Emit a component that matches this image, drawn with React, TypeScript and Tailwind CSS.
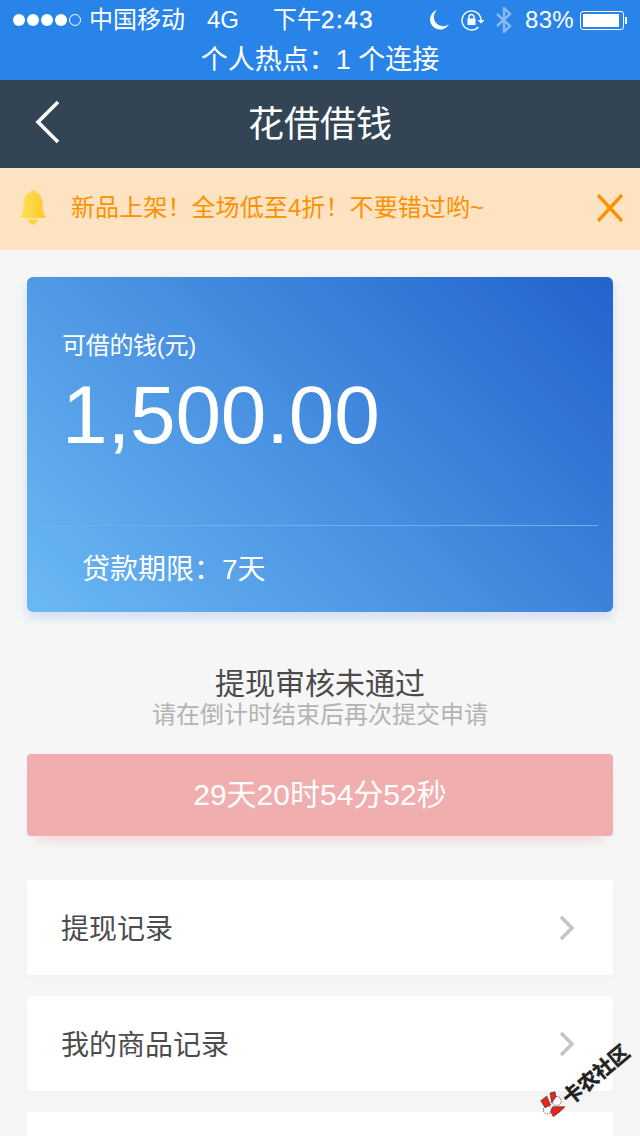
const cjk = "font-['Liberation_Sans','Noto_Sans_CJK_SC',sans-serif]";

function StatusBar() {
  return (
    <div className="flex h-10 items-center text-white pl-[13px] text-[24px] leading-none">
      <div className="flex items-center gap-[2px]">
        <span className="h-[12px] w-[12px] rounded-full bg-white" />
        <span className="h-[12px] w-[12px] rounded-full bg-white" />
        <span className="h-[12px] w-[12px] rounded-full bg-white" />
        <span className="h-[12px] w-[12px] rounded-full bg-white" />
        <span className="h-[12px] w-[12px] rounded-full border border-white" />
      </div>
      <span className="ml-[8px] w-[118px]">中国移动</span>
      <span className="w-[66px]">4G</span>
      <span className="w-[157px]">
        下午<span className="tracking-[1.6px] [-webkit-text-stroke:0.4px_white]">2:43</span>
      </span>
      {/* Moon */}
      <svg className="h-[22px] w-[20px]" viewBox="0 0 20 22" fill="#fff">
        <path d="M7 1a10 10 0 1 0 12 14A9 9 0 0 1 7 1z" />
      </svg>
      {/* Rotation lock */}
      <svg className="ml-[11px] h-[22px] w-[24px]" viewBox="0 0 24 22" fill="none" stroke="#fff" strokeWidth="1.4">
        <path d="M20 11a9.500 9.500 0 1 0-2.600 7" />
        <path d="M16.500 11l3.500 3.500 3.500-3.500z" fill="#fff" stroke="none" />
        <rect x="6.500" y="9.500" width="8" height="6.500" fill="#fff" stroke="none" />
        <path d="M8 10V8a2.500 2.500 0 0 1 5 0v2" />
      </svg>
      {/* Bluetooth */}
      <svg className="ml-[10px] h-[26px] w-[18px]" viewBox="0 0 18 26" fill="none" stroke="#8db9f0" strokeWidth="2.4">
        <path d="M2 7l13 12-6 6V1l6 6L2 19" />
      </svg>
      <span className="ml-[12px] w-[49px] tracking-[0.3px]">83%</span>
      {/* Battery */}
      <div className="ml-[6px] flex items-center">
        <div className="h-[19px] w-[44px] rounded-[3px] border border-white p-[2px]">
          <div className="h-full w-[36px] bg-white" />
        </div>
        <div className="ml-[1px] h-[7px] w-[2px] bg-white" />
      </div>
    </div>
  );
}

function Row({ label }: { label: string }) {
  return (
    <div className="flex h-[95px] items-center justify-between rounded-[4px] bg-white pl-[34px] pr-[38px] text-[28px] text-[#4c4c4c] shadow-[0_6px_12px_rgba(0,0,0,0.015)]">
      <span className="pt-[5px]">{label}</span>
      <svg className="h-[26px] w-[16px]" viewBox="0 0 16 26" fill="none" stroke="#c4c4c4" strokeWidth="3.500">
        <path d="M2 2l11 11L2 24" />
      </svg>
    </div>
  );
}

export default function App() {
  return (
    <div className={`relative h-[1136px] w-[640px] overflow-hidden bg-[#f6f6f6] ${cjk}`}>
      <div className="bg-[#2884e9]">
        <StatusBar />
        <div className="flex h-10 items-center justify-center text-[27px] leading-none text-white">
          个人热点：1 个连接
        </div>
      </div>

      <div className="relative flex h-[88px] items-center justify-center bg-[#334455] pt-[2px] text-[36px] text-white">
        <svg className="absolute left-[34px] top-[20px] h-[44px] w-[26px]" viewBox="0 0 26 44" fill="none" stroke="#fff" strokeWidth="3.600">
          <path d="M24 2L4 22l20 20" />
        </svg>
        花借借钱
      </div>

      <div className="flex h-[82px] items-center bg-[#fee3c3] pl-[18px] pr-[16px] pb-[2px] text-[24px] text-[#ff9000]">
        <svg className="h-[36px] w-[30px]" viewBox="0 0 30 36">
          <defs>
            <linearGradient id="bell" x1="0" y1="0" x2="1" y2="0">
              <stop offset="0" stopColor="#ffe25a" />
              <stop offset="1" stopColor="#ffc62b" />
            </linearGradient>
          </defs>
          <path d="M15 0c1.500 0 2.500 1 2.500 2.500C23 4 24.500 9 24.500 15c0 5 1 9 3.500 13H2c2.500-4 3.500-8 3.500-13C5.500 9 7 4 12.500 2.500 12.500 1 13.500 0 15 0z" fill="url(#bell)" />
          <path d="M10 29.500h10a5 5 0 0 1-10 0z" fill="#ffd23f" />
        </svg>
        <span className="ml-[23px] flex-1 tracking-[0.1px]">新品上架！全场低至4折！不要错过哟~</span>
        <svg className="h-[28px] w-[28px]" viewBox="0 0 28 28" fill="none" stroke="#ff9000" strokeWidth="3.400">
          <path d="M2 1l24 26M26 1L2 27" />
        </svg>
      </div>

      <div className="px-[27px] pt-[27px]">
        <div className="rounded-[6px] bg-[linear-gradient(45deg,#6bb9f3,#2263cd)] px-[15px] pt-[54px] text-white shadow-[0_6px_12px_rgba(60,130,230,0.2)]">
          <div className="px-[20px] text-[24px] leading-[30px] tracking-[-0.3px]">可借的钱(元)</div>
          <div className="mt-[6px] px-[20px] text-[82px] leading-[96px] tracking-[-0.2px]">1,500.00</div>
          <div className="mt-[62px] h-[87px] border-t border-[#74aeea] pl-[40px] pt-[27px] text-[28px] leading-[34px]">
            贷款期限：7天
          </div>
        </div>

        <div className="mt-[54px] text-center text-[30px] leading-[36px] text-[#4a4a4a]">提现审核未通过</div>
        <div className="text-center text-[24px] leading-[25px] text-[#b3b3b3]">请在倒计时结束后再次提交申请</div>

        <div className="mt-[27px] flex h-[82px] items-center justify-center rounded-[4px] bg-[#f1aeae] pb-[2px] text-[30px] text-white shadow-[0_12px_14px_-10px_rgba(225,130,130,0.35)]">
          29天20时54分52秒
        </div>

        <div className="mt-[44px] flex flex-col gap-[21px]">
          <Row label="提现记录" />
          <Row label="我的商品记录" />
          <div className="h-[60px] rounded-[4px] bg-white" />
        </div>
      </div>

      {/* Forum watermark */}
      <svg className="absolute left-[538px] top-[1090px] h-[30px] w-[30px]" viewBox="0 0 30 30">
        <circle cx="18.700" cy="11" r="4.500" fill="#fff" stroke="#222" strokeWidth="0.7" strokeDasharray="1.500 1" />
        <circle cx="9.300" cy="20" r="4" fill="#fff" stroke="#222" strokeWidth="0.7" strokeDasharray="1.500 1" />
        <path d="M2.700 10.700L8.700 6l4 9-5.700 2.700z" fill="#e4261c" stroke="#222" strokeWidth="0.5" />
        <path d="M12 3l5-1.300 1 5-4.300 6.300z" fill="#e4261c" stroke="#222" strokeWidth="0.5" />
        <path d="M14.700 16.700H27l-5 5-6.700 5-2.600-5z" fill="#e4261c" stroke="#222" strokeWidth="0.5" />
      </svg>
      <div className="absolute left-[554px] top-[1063px] h-[24px] w-[84px] -rotate-[40deg] whitespace-nowrap text-center text-[20px] font-bold leading-[24px] text-[#222] [-webkit-text-stroke:0.5px_#222]">
        卡农社区
      </div>
    </div>
  );
}
